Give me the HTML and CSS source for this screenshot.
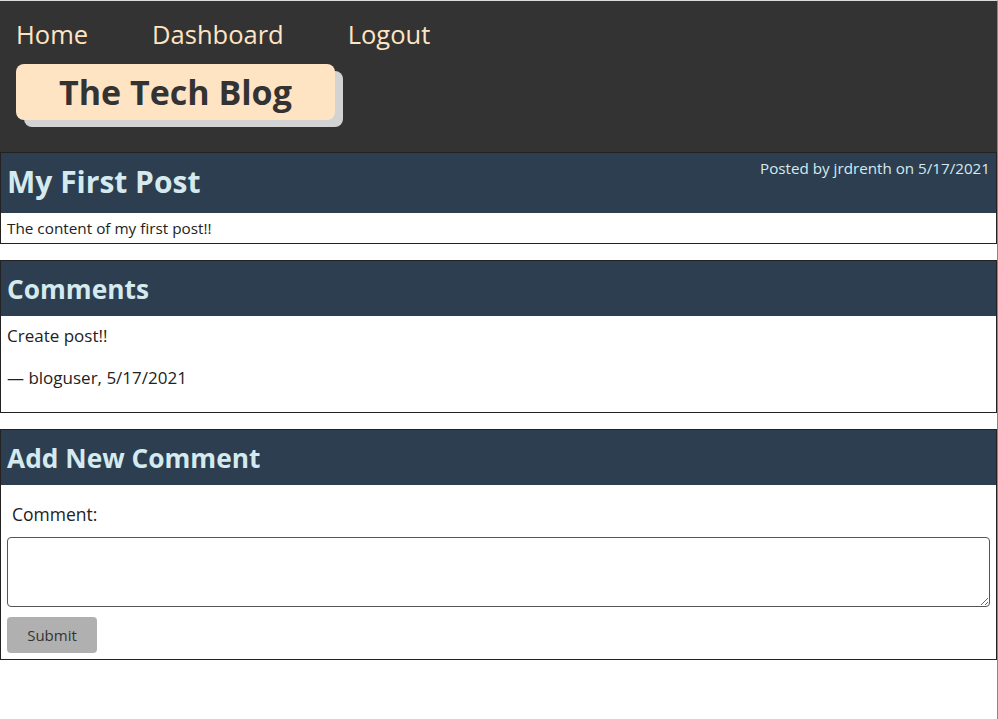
FILE: index.html
```html
<!DOCTYPE html>
<html lang="en">
<head>
<meta charset="utf-8">
<title>The Tech Blog</title>
<link rel="stylesheet" href="styles.css">
</head>
<body>
<header class="site-header">
  <nav class="nav">
    <a href="#" class="nav-link">Home</a>
    <a href="#" class="nav-link">Dashboard</a>
    <a href="#" class="nav-link">Logout</a>
  </nav>
  <div class="logo">The Tech Blog</div>
</header>
<main class="content">
  <section class="card">
    <div class="card-head post-head">
      <h1 class="post-title">My First Post</h1>
      <p class="post-meta">Posted by jrdrenth on 5/17/2021</p>
    </div>
    <div class="card-body post-body">The content of my first post!!</div>
  </section>
  <section class="card">
    <div class="card-head">
      <h2 class="card-title">Comments</h2>
    </div>
    <div class="card-body comments-body">
      <p class="comment-text">Create post!!</p>
      <p class="comment-meta">— bloguser, 5/17/2021</p>
    </div>
  </section>
  <section class="card">
    <div class="card-head">
      <h2 class="card-title">Add New Comment</h2>
    </div>
    <form class="card-body comment-form">
      <label class="form-label" for="comment">Comment:</label>
      <textarea id="comment" class="form-input"></textarea>
      <button type="button" class="btn">Submit</button>
    </form>
  </section>
</main>
</body>
</html>
```
FILE: styles.css
```css
* { box-sizing: border-box; }
html, body { height: 100%; }
body {
  margin: 0;
  font-family: "Open Sans", "Noto Sans", sans-serif;
  color: #222;
  background: #fff;
  border-top: 1px solid #dcdcdc;
  border-right: 1px solid #888;
}
.site-header {
  background: #333;
  padding: 12px 16px 32px;
}
.nav {
  display: flex;
  gap: 64px;
}
.nav-link {
  color: #ffe4c4;
  text-decoration: none;
  font-size: 25.5px;
  line-height: 42px;
}
.logo {
  display: inline-block;
  margin-top: 9px;
  background: #ffe4c4;
  color: #333;
  font-weight: 700;
  font-size: 34px;
  line-height: 56px;
  height: 56px;
  padding: 0 43px;
  border-radius: 8px;
  box-shadow: 8px 7px 0 #d3d3d3;
}
.content {
  display: flex;
  flex-direction: column;
  gap: 16px;
}
.card {
  border: 1px solid #222;
  background: #fff;
}
.card-head {
  background: #2c3e50;
  color: #d4eaee;
  display: flex;
  align-items: center;
  justify-content: space-between;
  padding: 0 6px;
  height: 55px;
}
.post-head {
  height: 60px;
  align-items: flex-start;
}
.post-title {
  margin: 0;
  font-size: 30px;
  font-weight: 700;
  line-height: 57px;
}
.post-meta {
  margin: 0;
  font-size: 15.2px;
  line-height: 30px;
}
.card-title {
  margin: 0;
  font-size: 26.3px;
  font-weight: 700;
}
.post-body {
  font-size: 15.3px;
  padding: 5px 6px 5px;
  line-height: 20px;
}
.comments-body {
  padding: 9px 6px 23px;
  font-size: 17px;
}
.comment-text, .comment-meta {
  margin: 0;
  line-height: 22px;
}
.comment-meta { margin-top: 20px; }
.comment-form {
  display: flex;
  flex-direction: column;
  align-items: flex-start;
  padding: 17px 6px 6px;
}
.form-label {
  font-size: 17.5px;
  margin-left: 5px;
  line-height: 24px;
}
.form-input {
  margin-top: 11px;
  width: 100%;
  height: 70px;
  border: 1px solid #555;
  border-radius: 4px;
  font-family: inherit;
  resize: vertical;
}
.btn {
  margin-top: 10px;
  width: 90px;
  height: 36px;
  border: none;
  border-radius: 4px;
  background: #b0b0b0;
  color: #333;
  font-family: inherit;
  font-size: 15px;
}
```
